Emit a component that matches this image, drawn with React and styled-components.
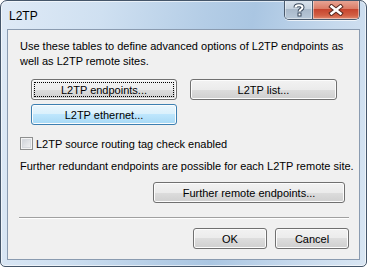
import styled, { createGlobalStyle } from "styled-components";

const GlobalStyle = createGlobalStyle`
  html, body {
    margin: 0;
    padding: 0;
    background: #ffffff;
  }
  body {
    font-family: Tahoma, "Liberation Sans", Arial, sans-serif;
  }
`;

const App = () => {
  return (
    <>
      <GlobalStyle />
      <Window>
        <TitleBar>
          <Title>L2TP</Title>
          <CaptionButtons>
            <HelpButton>
              <svg width="12" height="14" viewBox="0 0 12 14">
                <path
                  d="M2.5 4.5 C2.5 1.5 9.5 1.5 9.5 4.5 C9.5 6.5 6.5 6.5 6.5 8.5"
                  fill="none"
                  stroke="#3b4b5e"
                  strokeWidth="4"
                />
                <path
                  d="M2.5 4.5 C2.5 1.5 9.5 1.5 9.5 4.5 C9.5 6.5 6.5 6.5 6.5 8.5"
                  fill="none"
                  stroke="#ffffff"
                  strokeWidth="2"
                />
                <rect x="4.5" y="9.5" width="4" height="4" fill="#3b4b5e" />
                <rect x="5.5" y="10.5" width="2" height="2" fill="#ffffff" />
              </svg>
            </HelpButton>
            <CloseButton>
              <svg width="16" height="12" viewBox="0 0 16 12">
                <path
                  d="M3.5 2.5 L12.5 9.5 M12.5 2.5 L3.5 9.5"
                  stroke="#5a2a22"
                  strokeWidth="4.5"
                  strokeLinecap="square"
                />
                <path
                  d="M3.5 2.5 L12.5 9.5 M12.5 2.5 L3.5 9.5"
                  stroke="#ffffff"
                  strokeWidth="2.5"
                  strokeLinecap="square"
                />
              </svg>
            </CloseButton>
          </CaptionButtons>
        </TitleBar>
        <Client>
          <Intro>
            Use these tables to define advanced options of L2TP endpoints as
            <br />
            well as L2TP remote sites.
          </Intro>
          <ButtonGrid>
            <PushButton $focused>
              <FocusRing>L2TP endpoints...</FocusRing>
            </PushButton>
            <PushButton>L2TP list...</PushButton>
            <PushButton $hot>L2TP ethernet...</PushButton>
          </ButtonGrid>
          <CheckRow>
            <CheckBox />
            <span>L2TP source routing tag check enabled</span>
          </CheckRow>
          <Note>
            Further redundant endpoints are possible for each L2TP remote site.
          </Note>
          <RightRow>
            <PushButton $width={192}>Further remote endpoints...</PushButton>
          </RightRow>
          <Separator />
          <Footer>
            <PushButton $width={74}>OK</PushButton>
            <PushButton $width={74}>Cancel</PushButton>
          </Footer>
        </Client>
      </Window>
    </>
  );
};

export default App;

const Window = styled.div`
  box-sizing: border-box;
  width: 367px;
  height: 267px;
  display: flex;
  flex-direction: column;
  border: 1px solid #45566a;
  border-radius: 7px 7px 5px 5px;
  background: linear-gradient(
    100deg,
    #dfeaf6 0%,
    #cfe0f1 25%,
    #b4cde6 50%,
    #aac6e2 62%,
    #c6d9ed 82%,
    #d9e6f3 100%
  );
  box-shadow: inset 0 0 0 1px rgba(255, 255, 255, 0.6);
  overflow: hidden;
`;

const TitleBar = styled.div`
  height: 28px;
  display: flex;
  align-items: flex-start;
  justify-content: space-between;
  flex-shrink: 0;
`;

const Title = styled.div`
  font-family: "Segoe UI", "Liberation Sans", Arial, sans-serif;
  font-size: 12px;
  color: #000000;
  padding: 8px 0 0 8px;
`;

const CaptionButtons = styled.div`
  display: flex;
  margin-right: 6px;
  margin-top: -1px;
  border: 1px solid #4a5a6d;
  border-top: none;
  border-radius: 0 0 5px 5px;
  overflow: hidden;
  box-shadow: 0 1px 0 rgba(255, 255, 255, 0.7);
`;

const CaptionButton = styled.div`
  height: 19px;
  display: flex;
  align-items: center;
  justify-content: center;
  box-shadow: inset 0 0 0 1px rgba(255, 255, 255, 0.45);
`;

const HelpButton = styled(CaptionButton)`
  width: 27px;
  border-right: 1px solid #4a5a6d;
  background: linear-gradient(
    #dbe4ee 0%,
    #c5d2df 45%,
    #a9b9ca 50%,
    #b8c8d8 100%
  );
`;

const CloseButton = styled(CaptionButton)`
  width: 46px;
  background: linear-gradient(
    #e9a99a 0%,
    #dc7d67 45%,
    #c7452f 50%,
    #d25e43 80%,
    #e0896f 100%
  );
`;

const Client = styled.div`
  flex: 1;
  margin: 0 6px 6px 6px;
  border: 1px solid #8a9bb0;
  background: #f0f0f0;
  padding: 9px 10px 0 12px;
  font-size: 11px;
  color: #000000;
  display: flex;
  flex-direction: column;
`;

const Intro = styled.p`
  margin: 0;
  line-height: 15px;
  white-space: nowrap;
`;

const ButtonGrid = styled.div`
  display: grid;
  grid-template-columns: 146px 147px;
  column-gap: 13px;
  row-gap: 4px;
  margin: 10px 0 0 11px;
`;

const PushButton = styled.div`
  box-sizing: border-box;
  width: ${(p) => (p.$width ? `${p.$width}px` : "auto")};
  height: 21px;
  display: flex;
  align-items: center;
  justify-content: center;
  border: 1px solid ${(p) => (p.$hot ? "#3c7fb1" : "#707070")};
  border-radius: 3px;
  background: ${(p) =>
    p.$hot
      ? "linear-gradient(#eaf6fd 0%, #d9f0fc 50%, #bee6fd 50%, #a7d9f5 100%)"
      : "linear-gradient(#f2f2f2 0%, #ebebeb 50%, #dddddd 50%, #cfcfcf 100%)"};
  box-shadow: inset 0 0 0 1px #fcfcfc;
  font-size: 11px;
  padding: 2px;
  white-space: nowrap;
`;

const FocusRing = styled.span`
  box-sizing: border-box;
  flex: 1;
  align-self: stretch;
  display: flex;
  align-items: center;
  justify-content: center;
  border: 1px dotted #000000;
`;

const CheckRow = styled.label`
  display: flex;
  align-items: center;
  gap: 3px;
  margin: 12px 0 0 0;
  height: 13px;
`;

const CheckBox = styled.span`
  box-sizing: border-box;
  width: 13px;
  height: 13px;
  border: 1px solid #8e8f8f;
  background: linear-gradient(135deg, #cbcfd5 0%, #f6f6f6 100%);
  box-shadow: inset 0 0 0 1px #f4f4f4, inset 0 0 0 2px #d6d9de;
`;

const Note = styled.p`
  margin: 9px 0 0 0;
  line-height: 15px;
  white-space: nowrap;
`;

const RightRow = styled.div`
  display: flex;
  justify-content: flex-end;
  margin: 8px 4px 0 0;
`;

const Separator = styled.hr`
  margin: 14px 0 0 -1px;
  border: none;
  border-top: 1px solid #a0a0a0;
  border-bottom: 1px solid #ffffff;
  height: 0;
`;

const Footer = styled.div`
  display: flex;
  justify-content: flex-end;
  gap: 8px;
  margin-top: 9px;
`;
